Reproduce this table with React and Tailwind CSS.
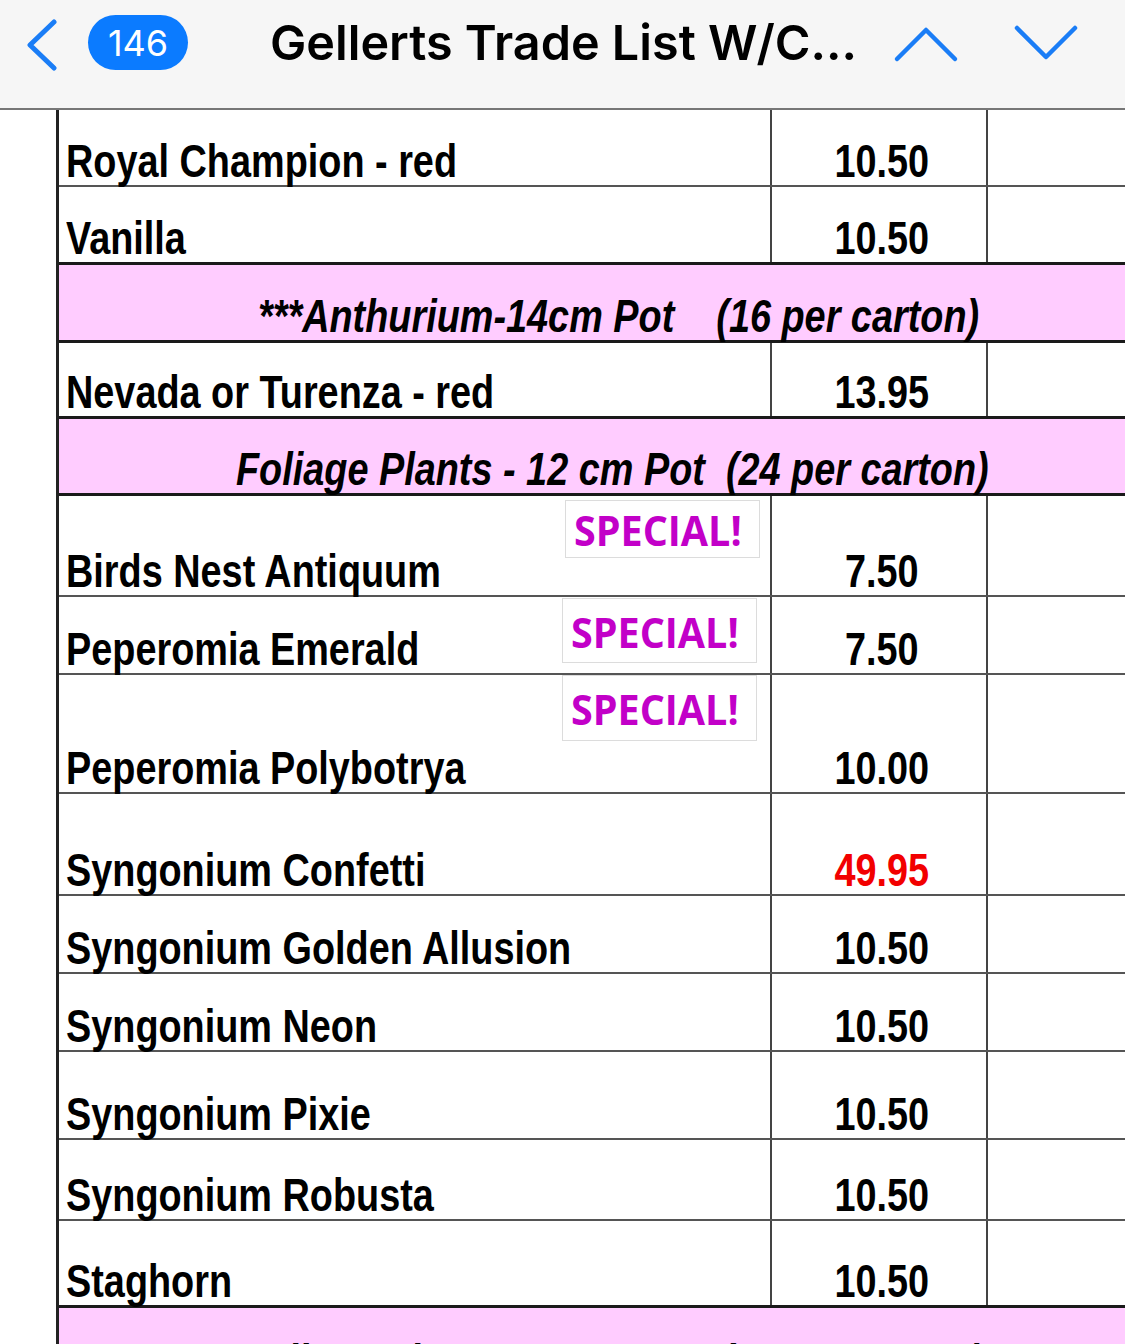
import React from "react";

const rows = [
  { name: "Royal Champion - red", price: "10.50", h: "h-[77px]" },
  { name: "Vanilla", price: "10.50", h: "h-[78px]", thick: true },
  { pink: "***Anthurium-14cm Pot    (16 per carton)", pad: "pl-[199px]", h: "h-[78px]" },
  { name: "Nevada or Turenza - red", price: "13.95", h: "h-[76px]", thick: true },
  { pink: "Foliage Plants - 12 cm Pot  (24 per carton)", pad: "pl-[177px]", h: "h-[77px]" },
  { name: "Birds Nest Antiquum", price: "7.50", h: "h-[101px]", special: "top-[4px] h-[58px] left-[506px]" },
  { name: "Peperomia Emerald", price: "7.50", h: "h-[78px]", special: "top-[1px] h-[65px] left-[503px]" },
  { name: "Peperomia Polybotrya", price: "10.00", h: "h-[119px]", special: "top-0 h-[66px] left-[503px]" },
  { name: "Syngonium Confetti", price: "49.95", h: "h-[102px]", red: true },
  { name: "Syngonium Golden Allusion", price: "10.50", h: "h-[78px]" },
  { name: "Syngonium Neon", price: "10.50", h: "h-[78px]" },
  { name: "Syngonium Pixie", price: "10.50", h: "h-[88px]" },
  { name: "Syngonium Robusta", price: "10.50", h: "h-[81px]" },
  { name: "Staghorn", price: "10.50", h: "h-[87px]", thick: true },
  { pink: "Foliage Plants - 14cm Pot  (16 per carton)", pad: "pl-[182px]", h: "h-[80px]" },
];

// Arial Narrow look: Liberation Sans squeezed horizontally
const cellFont =
  "inline-block font-['Liberation_Sans',Arial,sans-serif] font-bold text-[47px] leading-none scale-x-[0.805] whitespace-pre";

function Row({ r }) {
  if (r.pink) {
    return (
      <div className={`${r.h} bg-[#ffccff] border-b-[3px] border-[#1a1a1a] flex items-end pb-[1px] ${r.pad}`}>
        <span className={`${cellFont} italic origin-left text-black`}>{r.pink}</span>
      </div>
    );
  }
  return (
    <div className={`${r.h} flex ${r.thick ? "border-b-[3px] border-[#1a1a1a]" : "border-b-2 border-[#555]"}`}>
      <div className="relative w-[713px] shrink-0 flex items-end pl-[7px] pb-[1px] border-r-2 border-[#444]">
        <span className={`${cellFont} origin-left text-black`}>{r.name}</span>
        {r.special && (
          <div className={`absolute ${r.special} w-[195px] border border-[#dcdcdc] bg-white flex items-center pl-[8px] pt-[2px]`}>
            <span className="inline-block origin-left scale-x-[0.94] font-['Open_Sans',sans-serif] font-bold text-[42px] leading-none text-[#c200c8]">
              SPECIAL!
            </span>
          </div>
        )}
      </div>
      <div className="w-[216px] shrink-0 flex items-end justify-center pl-[6px] pb-[1px] border-r-2 border-[#444]">
        <span className={`${cellFont} origin-center ${r.red ? "text-[#f20000]" : "text-black"}`}>{r.price}</span>
      </div>
      <div className="flex-1" />
    </div>
  );
}

export default function App() {
  return (
    <div className="w-[1125px] h-[1344px] overflow-hidden bg-white">
      <div className="h-[110px] bg-[#f6f6f6] border-b-2 border-[#777] flex items-start pt-[15px]">
        <svg className="ml-[24px] mt-[4px]" width="40" height="52" viewBox="0 0 40 52" fill="none">
          <path d="M30 3 L6 26 L30 49" stroke="#1a7df6" strokeWidth="5" strokeLinecap="round" strokeLinejoin="round" />
        </svg>
        <div className="ml-[24px] w-[100px] h-[55px] rounded-full bg-[#0b7bff] flex items-center justify-center">
          <span className="font-['Inter',sans-serif] text-[36px] leading-none text-white">146</span>
        </div>
        <div className="ml-[82px] w-[600px] font-['Inter',sans-serif] font-semibold text-[48.5px] leading-[55px] text-black whitespace-nowrap">
          Gellerts Trade List W/C...
        </div>
        <svg className="ml-[23px] mt-[10px]" width="66" height="40" viewBox="0 0 66 40" fill="none">
          <path d="M4 34 L33 5 L62 34" stroke="#1a7df6" strokeWidth="4.5" strokeLinecap="round" strokeLinejoin="round" />
        </svg>
        <svg className="ml-[54px] mt-[8px]" width="66" height="40" viewBox="0 0 66 40" fill="none">
          <path d="M4 5 L33 34 L62 5" stroke="#1a7df6" strokeWidth="4.5" strokeLinecap="round" strokeLinejoin="round" />
        </svg>
      </div>
      <div className="ml-[56px] border-l-[3px] border-[#222]">
        {rows.map((r, i) => (
          <Row key={i} r={r} />
        ))}
      </div>
    </div>
  );
}
